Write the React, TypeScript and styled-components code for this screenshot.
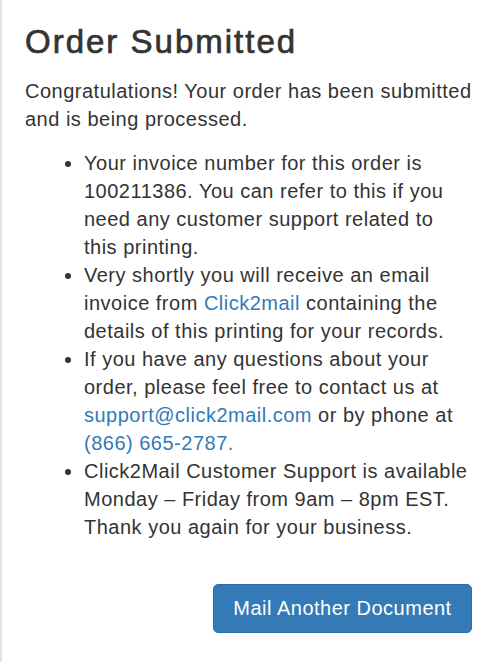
import React from 'react';
import styled, { createGlobalStyle } from 'styled-components';

const GlobalStyle = createGlobalStyle`
  html, body {
    margin: 0;
    padding: 0;
    background: #fff;
  }
  body {
    font-family: "Liberation Sans", Arial, Helvetica, sans-serif;
    color: #333;
  }
`;

const Panel = styled.div`
  box-sizing: border-box;
  min-height: 662px;
  border-left: 2px solid #e3e3e3;
  padding: 22px 21px 20px 23px;
  display: flex;
  flex-direction: column;
`;

const Title = styled.h1`
  margin: 0 0 15px;
  font-size: 33px;
  font-weight: 400;
  -webkit-text-stroke: 0.7px #333;
  letter-spacing: 2px;
  line-height: 40px;
  color: #333;
`;

const Text = styled.p`
  margin: 0 0 16px;
  font-size: 20px;
  letter-spacing: 0.5px;
  line-height: 28px;
`;

const List = styled.ul`
  margin: 0;
  padding-left: 59px;
  font-size: 20px;
  letter-spacing: 0.5px;
  line-height: 28px;
`;

const Item = styled.li``;

const Link = styled.a`
  color: #337ab7;
  text-decoration: none;
`;

const Actions = styled.div`
  display: flex;
  justify-content: flex-end;
  margin-top: 43px;
`;

const Button = styled.button`
  box-sizing: border-box;
  width: 259px;
  height: 49px;
  border: 1px solid #2e6da4;
  border-radius: 5px;
  background: #337ab7;
  color: #fff;
  font-family: "Liberation Sans", Arial, Helvetica, sans-serif;
  font-size: 20px;
  letter-spacing: 0.5px;
  cursor: pointer;
`;

export default function App() {
  return (
    <>
      <GlobalStyle />
      <Panel>
        <Title>Order Submitted</Title>
        <Text>
          Congratulations! Your order has been submitted and is being processed.
        </Text>
        <List>
          <Item>
            Your invoice number for this order is 100211386. You can refer to this if you
            need any customer support related to this printing.
          </Item>
          <Item>
            Very shortly you will receive an email invoice from <Link href="#">Click2mail</Link>{' '}
            containing the details of this printing for your records.
          </Item>
          <Item>
            If you have any questions about your order, please feel free to contact us at{' '}
            <Link href="#">support@click2mail.com</Link> or by phone at{' '}
            <Link href="#">(866) 665-2787.</Link>
          </Item>
          <Item>
            Click2Mail Customer Support is available Monday – Friday from 9am – 8pm EST.
            Thank you again for your business.
          </Item>
        </List>
        <Actions>
          <Button>Mail Another Document</Button>
        </Actions>
      </Panel>
    </>
  );
}
